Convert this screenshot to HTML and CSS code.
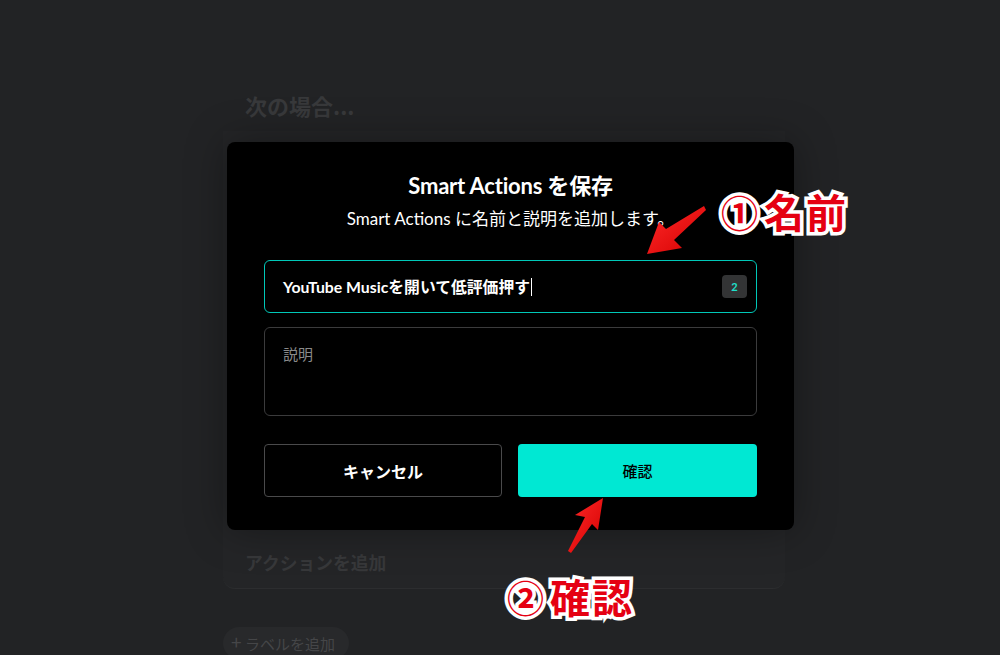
FILE: index.html
```html
<!DOCTYPE html>
<html lang="ja">
<head>
<meta charset="utf-8">
<link rel="stylesheet" href="styles.css">
</head>
<body>
<div class="page">
  <div class="bg-content">
    <div class="bg-heading">次の場合...</div>
    <div class="bg-card">
      <div class="bg-card-title">アクションを追加</div>
    </div>
    <div class="bg-pill"><span class="plus">+</span> ラベルを追加</div>
  </div>

  <div class="modal">
    <h1 class="title">Smart Actions を保存</h1>
    <p class="subtitle">Smart Actions に名前と説明を追加します。</p>
    <div class="field name-field">
      <span class="name-text">YouTube Musicを開いて低評価押す</span><span class="caret"></span>
      <span class="badge">2</span>
    </div>
    <div class="field desc-field">
      <span class="placeholder">説明</span>
    </div>
    <div class="buttons">
      <button class="btn btn-cancel">キャンセル</button>
      <button class="btn btn-confirm">確認</button>
    </div>
  </div>

  <svg class="arrows" width="1000" height="655" viewBox="0 0 1000 655">
    <defs>
      <linearGradient id="rg" x1="0" y1="0" x2="1" y2="1">
        <stop offset="0" stop-color="#ff2a2a"/>
        <stop offset="1" stop-color="#d40000"/>
      </linearGradient>
    </defs>
    <polygon points="647,254 659,222 666,229 704,206 706,210 674,240 682,248" fill="url(#rg)"/>
    <polygon points="603,498 598,530 592,524 571,553 568,551 585,517 575,515" fill="url(#rg)"/>
  </svg>
  <div class="note note1"><span class="circ">①</span>名前</div>
  <div class="note note2"><span class="circ">②</span>確認</div>
</div>
</body>
</html>
```
FILE: styles.css
```css
html, body {
  margin: 0;
  padding: 0;
}
body {
  background: #222325;
  font-family: "Lato", "Noto Sans CJK JP", sans-serif;
}
.page {
  position: relative;
  width: 1000px;
  height: 655px;
  overflow: hidden;
  background: #222325;
}
.bg-content {
  margin-left: 223px;
  width: 562px;
  padding-top: 89px;
  display: flex;
  flex-direction: column;
}
.bg-heading {
  font-family: "Noto Sans CJK JP", sans-serif;
  font-weight: 700;
  font-size: 22px;
  line-height: 32px;
  color: #38393b;
  padding-left: 22px;
}
.bg-card {
  margin-top: 10px;
  height: 458px;
  box-sizing: border-box;
  background: #242527;
  border-radius: 0 0 12px 12px;
  border-bottom: 1px solid #2c2d2f;
  display: flex;
  flex-direction: column;
  justify-content: flex-end;
  padding: 0 0 13px 22px;
}
.bg-card-title {
  font-family: "Noto Sans CJK JP", sans-serif;
  font-weight: 700;
  font-size: 17.8px;
  line-height: 26px;
  color: #37383a;
}
.bg-pill {
  align-self: flex-start;
  margin-top: 38px;
  height: 32px;
  padding: 0 14px 0 8px;
  border-radius: 16px;
  background: #28292b;
  font-family: "Noto Sans CJK JP", sans-serif;
  font-size: 15px;
  line-height: 30px;
  color: #454648;
}
.bg-pill .plus {
  font-size: 19px;
}

.modal {
  position: absolute;
  left: 227px;
  top: 142px;
  width: 567px;
  height: 388px;
  box-sizing: border-box;
  background: #000;
  border-radius: 8px;
  padding: 31px 37px 33px;
  box-shadow: 0 0 40px rgba(0,0,0,0.35);
  display: flex;
  flex-direction: column;
}
.title {
  margin: 0;
  text-align: center;
  color: #fff;
  font-family: "Lato", "Noto Sans CJK JP", sans-serif;
  font-size: 22px;
  font-weight: 700;
  line-height: 26px;
  letter-spacing: -0.2px;
}
.subtitle {
  margin: 9px 0 0;
  text-align: center;
  color: #fff;
  font-family: "Lato", "Noto Sans CJK JP", sans-serif;
  font-size: 17px;
  line-height: 22px;
}
.field {
  box-sizing: border-box;
  border-radius: 6px;
  display: flex;
}
.name-field {
  margin-top: 30px;
  height: 53px;
  border: 1px solid #00c8b8;
  align-items: center;
  padding: 0 9px 0 18px;
}
.name-text {
  color: #fff;
  font-family: "Lato", "Noto Sans CJK JP", sans-serif;
  font-weight: 700;
  font-size: 15.8px;
}
.caret {
  display: inline-block;
  width: 1px;
  height: 18px;
  background: #fff;
  margin-left: 1px;
}
.badge {
  margin-left: auto;
  width: 25px;
  height: 23px;
  border-radius: 4px;
  background: #333435;
  color: #1fe0cc;
  font-size: 11px;
  font-weight: 700;
  display: flex;
  align-items: center;
  justify-content: center;
}
.desc-field {
  margin-top: 14px;
  height: 89px;
  border: 1px solid #3b3b3c;
  padding: 15px 18px;
  align-items: flex-start;
}
.placeholder {
  color: #8a8a8a;
  font-family: "Noto Sans CJK JP", sans-serif;
  font-size: 15px;
  line-height: 22px;
}
.buttons {
  margin-top: 28px;
  display: grid;
  grid-template-columns: 238px 239px;
  column-gap: 16px;
}
.btn {
  height: 53px;
  border-radius: 4px;
  font-family: "Noto Sans CJK JP", sans-serif;
  font-size: 16px;
  cursor: pointer;
}
.btn-cancel {
  background: #000;
  border: 1px solid #4a4a4b;
  color: #fff;
  font-weight: 700;
}
.btn-confirm {
  background: #00e8d3;
  border: none;
  color: #000;
  font-weight: 500;
  font-size: 15px;
}

.arrows {
  position: absolute;
  left: 0;
  top: 0;
}
.note {
  position: absolute;
  font-family: "Noto Sans CJK JP", sans-serif;
  font-weight: 700;
  font-size: 40px;
  line-height: 44px;
  color: #e50012;
  -webkit-text-stroke: 7px #fff;
  paint-order: stroke fill;
  letter-spacing: 2px;
  white-space: nowrap;
}
.note .circ {
  font-size: 37px;
  margin-right: 4px;
}
.note1 {
  left: 721px;
  top: 189px;
}
.note2 {
  left: 507px;
  top: 574px;
}
```
